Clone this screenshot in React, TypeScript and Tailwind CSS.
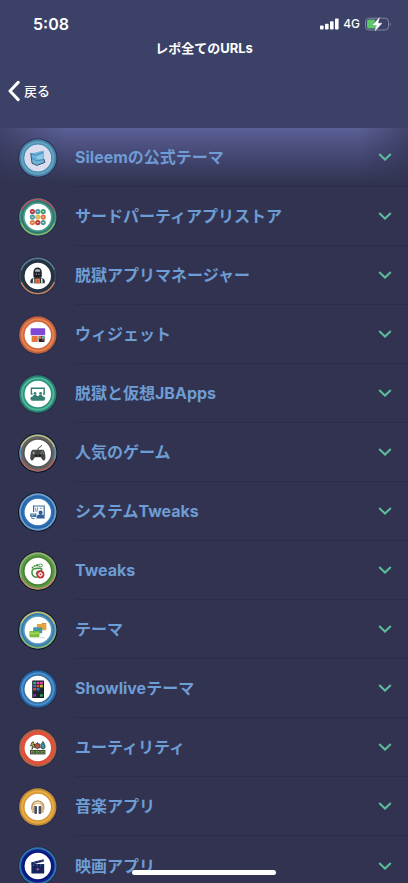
import type { ReactNode } from "react";

interface Category {
  name: string;
  icon: ReactNode;
}

// Round badge: coloured rings around a white disc that holds the glyph
function Badge({
  outer,
  middle,
  inner,
  edge,
  top,
  bottom,
  children,
}: {
  outer: string;
  middle: string;
  inner: string;
  edge?: string;
  top?: string;
  bottom?: string;
  children: ReactNode;
}) {
  return (
    <svg viewBox="0 0 40 40" className="size-10 shrink-0" aria-hidden="true">
      <circle cx="19.8" cy="20.2" r="19.6" fill={edge ?? "#282b47"} />
      <circle cx="19.8" cy="20" r="18.7" fill={outer} />
      {top && <path d="M3.3 14A17.6 17.6 0 0 1 36.3 14" fill="none" stroke={top} strokeWidth="1.6" />}
      {bottom && <path d="M3.3 26A17.6 17.6 0 0 0 36.3 26" fill="none" stroke={bottom} strokeWidth="1.6" />}
      <circle cx="19.8" cy="20" r="16.8" fill={middle} />
      <circle cx="19.8" cy="20" r="14.8" fill={inner} />
      <circle cx="19.8" cy="20" r="13.2" fill="#fff" />
      {children}
    </svg>
  );
}

const storeDots = [
  ["#b23a48", "#3f9aa0", "#3c9c78"],
  ["#4a9ca8", "#e0b545", "#d9743f"],
  ["#d98244", "#bd3547", "#4b9a92"],
];

const tiles = [
  ["#3aa99a", "#d04a9a", "#e0479a"],
  ["#3b6fc9", "#d5572f", "#c9b43c"],
  ["#e2474b", "#2c7dc0", "#202733"],
  ["#202733", "#202733", "#202733"],
  ["#7b35a8", "#202733", "#2d9d4c"],
];

const categories: Category[] = [
  {
    name: "Sileemの公式テーマ",
    icon: (
      <Badge outer="#477fa8" middle="#62a5bd" inner="#4c8eb6">
        <circle cx="19.8" cy="20" r="13.2" fill="#dcdcef" />
        <path d="m12.6 15.2 5.2-.8 7.8-1.8.6 8.6.8 3.2-8.2 3-4.6-2.2-.6-4.4z" fill="#6db3dc" />
        <path d="m12.6 15.2 5 2.2 8.2-3.4M14 20l4.2 2.8 8-1.2" fill="none" stroke="#4382a6" strokeWidth=".8" />
        <path d="m18.6 18.2 5.8-1.8.6 4-5.4 1.2z" fill="#8fcbe8" />
        <path d="m12.8 15.4 1.2 9.8 4.8 2.2 8-3-.8-3.2" fill="none" stroke="#2d4558" strokeWidth=".9" />
      </Badge>
    ),
  },
  {
    name: "サードパーティアプリストア",
    icon: (
      <Badge outer="#479180" middle="#2f7970" inner="#4a9c8c" top="#bd4967" bottom="#83ba65">
        {storeDots.map((row, y) =>
          row.map((color, x) => (
            <g key={`${x}-${y}`}>
              <circle cx={14.4 + x * 5.4} cy={14.6 + y * 5.5} r="2.6" fill={color} />
              <path d={`M${13.5 + x * 5.4} ${14.6 + y * 5.5}h1.8`} stroke="#f1e5d8" strokeWidth=".9" />
            </g>
          ))
        )}
      </Badge>
    ),
  },
  {
    name: "脱獄アプリマネージャー",
    icon: (
      <Badge outer="#3c4554" middle="#263448" inner="#243143" top="#5c7e91" bottom="#c9835d">
        <path d="M15.4 21v-4.6c0-3 1.8-4.8 4.2-4.8s4.2 1.8 4.2 4.8V21l-2 1.4h-4.400z" fill="#22252c" />
        <path d="M17 14.200c1-1.200 4.200-1.200 5.200 0l-.2 1.600h-4.800z" fill="#aab3b8" />
        <path d="M17.200 17.200h4.800l-.6 2.600h-3.600z" fill="#0f1217" />
        <path d="M17.800 17.800h1.300v.8h-1.300zm2.400 0h1.300v.8h-1.300z" fill="#fff" />
        <path d="M12.400 27.300v-2.300c0-1.700 2-2.800 4.100-3.200h6.200c2.100.4 4.100 1.500 4.100 3.200v2.300z" fill="#2c343c" />
        <path d="m15.700 22.500-.2 4.700M23.700 22.500l.2 4.700" stroke="#e5eef0" strokeWidth="1.400" />
        <rect x="17.200" y="22.600" width="4.800" height="5" rx=".5" fill="#df7041" />
        <path d="M18.900 25.200h1.500" stroke="#6b382b" strokeWidth=".9" />
      </Badge>
    ),
  },
  {
    name: "ウィジェット",
    icon: (
      <Badge outer="#bd6040" middle="#e98249" inner="#cf6640">
        <rect x="12.600" y="13.200" width="14.600" height="7" rx=".8" fill="#8046d6" />
        <rect x="13.600" y="21" width="6.200" height="6" rx=".8" fill="#e5753b" />
        <rect x="20.600" y="21" width="6" height="6" rx=".8" fill="#202329" />
        <path d="M20.800 21.200h2.500v2.600h-2.500z" fill="#e87557" />
        <path d="M23.800 21.200h2.600v2.600h-2.600z" fill="#59bda1" />
        <path d="M23.800 24.400h2.600v1h-2.600z" fill="#e44d54" />
      </Badge>
    ),
  },
  {
    name: "脱獄と仮想JBApps",
    icon: (
      <Badge outer="#287e72" middle="#51b898" inner="#2b927c">
        <path d="M14.600 20h-1.200v-5.800h12.800V20H25" fill="none" stroke="#347f72" strokeWidth="1.400" />
        <circle cx="17" cy="19.400" r="1.400" fill="#347f72" />
        <circle cx="22.600" cy="19.400" r="1.400" fill="#347f72" />
        <path d="M15 22c.6-1.600 3.400-1.600 4 0h1.600c.6-1.600 3.400-1.600 4 0v1H15z" fill="#347f72" />
        <rect x="12.400" y="22.400" width="14.800" height="4.400" rx="2.200" fill="#347f72" />
      </Badge>
    ),
  },
  {
    name: "人気のゲーム",
    icon: (
      <Badge outer="#6291b6" middle="#656363" inner="#565656" edge="#0a0c10" top="#c0be75" bottom="#b75a50">
        <path d="M20 17.500c-.4-2.200.6-3 1.700-3.300 1-.3 1.400-.9 2-2.200" fill="none" stroke="#303234" strokeWidth="1" />
        <path d="M15.200 16.800h9.300c1.600 0 2.200 1.700 2.700 5 .5 3.500.2 5.500-1.200 5.600-1.200.1-2.200-1.700-3.200-3.200h-5.900c-1 1.500-2 3.300-3.200 3.200-1.400-.1-1.700-2.100-1.200-5.600.5-3.300 1.100-5 2.700-5z" fill="#424446" />
        <path d="M15.700 18.500v3M14.200 20h3" stroke="#999" strokeWidth="1" />
        <circle cx="24.200" cy="18.800" r=".7" fill="#9da4a0" />
        <circle cx="25.400" cy="20.200" r=".7" fill="#a28e70" />
        <circle cx="23" cy="20.200" r=".7" fill="#8ba0b1" />
        <circle cx="18.100" cy="22.500" r="1.300" fill="#191b1c" />
        <circle cx="21.800" cy="22.500" r="1.300" fill="#191b1c" />
      </Badge>
    ),
  },
  {
    name: "システムTweaks",
    icon: (
      <Badge outer="#6d9fce" middle="#2865a9" inner="#3173b7" edge="#0b1320">
        <path d="M15.600 20v-6h10.600v10" fill="none" stroke="#3a6c9f" strokeWidth="1.200" />
        <path d="M17.600 18v-1.800M19.400 18v-2.600M17.200 19h3M21.800 16.200h2.400" stroke="#5587b5" strokeWidth=".9" />
        <circle cx="22.600" cy="20.400" r="2" fill="#2b6196" />
        <path d="M18.400 26.600c.1-3.400 1.600-4.400 4.200-4.400s4 1 4.200 4.400z" fill="#2b6196" />
        <rect x="12.200" y="21.400" width="6.200" height="3.500" rx=".4" fill="#396c9d" />
        <path d="M13.400 22.600h3.700M13.400 23.800h2" stroke="#c7dced" strokeWidth=".6" />
        <path d="M13.800 25.100v1.500h3" fill="none" stroke="#396c9d" strokeWidth=".8" />
      </Badge>
    ),
  },
  {
    name: "Tweaks",
    icon: (
      <Badge outer="#91ad82" middle="#589a3c" inner="#478236" edge="#10170e" bottom="#bd8670">
        <path
          d="M18.600 26.200c-3 .4-5.200-3-4.600-6 .4-2 2-2.600 4-2.700 2.400-.1 4.600-.8 5.700.4.800 1-.4 2-1.800 2.100-2 .1-3.300 1.200-3.400 3"
          fill="none"
          stroke="#439344"
          strokeWidth="1.500"
          strokeLinecap="round"
        />
        <circle cx="14.600" cy="16.400" r="1" fill="#439344" />
        <circle cx="16.700" cy="15" r="1.100" fill="#439344" />
        <circle cx="19.200" cy="14.300" r="1.200" fill="#439344" />
        <ellipse cx="22.600" cy="14.500" rx="1.900" ry="1.400" fill="none" stroke="#439344" strokeWidth="1" />
        <circle cx="22.400" cy="23.400" r="4" fill="#cb3039" />
        <circle cx="22.400" cy="23.400" r="1.500" fill="none" stroke="#fff" strokeWidth="1.100" />
        <path d="M22.400 20.900v1M22.400 24.900v1M19.900 23.400h1M23.900 23.400h1" stroke="#fff" strokeWidth=".8" />
      </Badge>
    ),
  },
  {
    name: "テーマ",
    icon: (
      <Badge outer="#6fa4bb" middle="#377eaa" inner="#5898bd" edge="#0a1014" top="#cbb96a" bottom="#88b36a">
        <rect x="18.800" y="14" width="9.600" height="6.200" rx=".8" fill="#e7a244" />
        <path d="M23.400 14v-.2l.8-.8h3.600l.6 1z" fill="#d98a24" />
        <rect x="15.200" y="17.200" width="9" height="6" rx=".8" fill="#3f9aa6" />
        <rect x="11.400" y="21" width="10" height="6" rx=".8" fill="#78ba37" />
        <path d="M11.600 21.800c3 1.400 6 .8 9.600-.4v2.400c-4 1.200-7 1-9.600.6z" fill="#9bd250" />
        <path d="M12.500 27.700h14" stroke="#bac5b6" strokeWidth=".7" />
      </Badge>
    ),
  },
  {
    name: "Showliveテーマ",
    icon: (
      <Badge outer="#2364a1" middle="#4b91cf" inner="#346da0">
        <rect x="14.200" y="11.400" width="11.800" height="17.600" rx=".5" fill="#18212b" />
        {tiles.map((row, y) =>
          row.map((color, x) => (
            <rect key={`${x}-${y}`} x={15.200 + x * 3.400} y={12.800 + y * 3.100} width="2.900" height="2.500" fill={color} />
          ))
        )}
      </Badge>
    ),
  },
  {
    name: "ユーティリティ",
    icon: (
      <Badge outer="#ad6641" middle="#e3523d" inner="#df4d38">
        <path d="m14.200 14-1.700 3.800h2l-.6 3.600 3.200-5H15l.8-2.400z" fill="#d6c340" stroke="#28322a" strokeWidth=".8" />
        <path d="m19.500 14.500.9 1.500 1.800.2-.5 1.600.6 1.800-1.800.4-1.200 1-1.100-1-1.800-.4.500-1.800-.5-1.600 1.800-.2z" fill="#bd5140" stroke="#28322a" strokeWidth=".8" />
        <path d="M24.900 13.500c1.400 2 2.200 3.600 2.200 5.200 0 3-4.200 3-4.200 0 0-1.600.8-3.200 2-5.200z" fill="#3c919d" stroke="#263841" strokeWidth=".8" />
        {[12.5, 17.6, 22.7].map((x) => (
          <g key={x}>
            <rect x={x} y="22.400" width="4.300" height="3.600" fill="#83a553" stroke="#293928" strokeWidth=".8" />
            <path d={`M${x + 1.200} 24.2h2`} stroke="#293928" strokeWidth="1" />
          </g>
        ))}
      </Badge>
    ),
  },
  {
    name: "音楽アプリ",
    icon: (
      <Badge outer="#c08a39" middle="#e8ad43" inner="#d59635">
        <path d="M14.200 22.800c-2.600-11.800 13.800-11.800 11.200 0" fill="none" stroke="#b99a68" strokeWidth="1.600" />
        <path d="M15.600 20c.6-5.200 7.800-5.200 8.400 0" fill="none" stroke="#e7c17c" strokeWidth="1.300" />
        <rect x="13.800" y="19.800" width="2.400" height="6.200" rx="1.100" fill="#d3b384" />
        <rect x="23.400" y="19.800" width="2.400" height="6.200" rx="1.100" fill="#d3b384" />
        <rect x="16.300" y="19" width="2.700" height="8" rx=".9" fill="#494e5b" />
        <rect x="20.600" y="19" width="2.700" height="8" rx=".9" fill="#494e5b" />
      </Badge>
    ),
  },
  {
    name: "映画アプリ",
    icon: (
      <Badge outer="#2d76ab" middle="#10208b" inner="#07167e">
        <path d="m13 16.400 12.400-3.200.6 2.400-12.400 3.200z" fill="#17255c" />
        <rect x="13.400" y="18" width="12.800" height="9.400" rx=".5" fill="#14245f" />
        <path d="m16 15.900 1.300 1.600M19.600 14.900l1.300 1.600M23 14l1.300 1.600M16 18.400l-.9 1.500M19.600 18.400l-.9 1.500M23.200 18.400l-.9 1.500" stroke="#8a9ec5" strokeWidth=".6" />
        <path d="m18.800 21.700 2.800 1.600-2.800 1.600z" fill="#cf5b83" />
      </Badge>
    ),
  },
];

function StatusBar() {
  return (
    <div className="flex h-12 items-center justify-between pr-4 pl-[33px] text-white">
      <span className="text-base font-semibold">5:08</span>
      <div className="flex items-center gap-1">
        <svg viewBox="0 0 20 12" className="h-3 w-5" fill="currentColor" aria-hidden="true">
          <rect x="1" y="7.500" width="3.600" height="4" rx=".8" />
          <rect x="6" y="5.800" width="3.600" height="5.700" rx=".8" />
          <rect x="11" y="3.200" width="3.600" height="8.300" rx=".8" />
          <rect x="16" y=".5" width="3.600" height="11" rx=".8" />
        </svg>
        <span className="text-xs leading-4 font-medium">4G</span>
        <svg viewBox="0 0 28 16" className="h-4 w-7" aria-hidden="true">
          <rect x="1.500" y="2.200" width="23" height="11.800" rx="3.400" fill="none" stroke="#8286a3" strokeWidth="1" />
          <path d="M5.200 3.600h6.300L9.200 9H12v3.600H5.200c-1.300 0-2.200-.8-2.200-2.200V5.800c0-1.400.9-2.200 2.200-2.200z" fill="#5cc568" />
          <path d="M25.800 6.400c1.300.5 1.300 3.100 0 3.600z" fill="#8286a3" />
          <path d="M15.400 1.600 8.800 8.900h3.800L11.200 14.700l6.800-7.500h-4z" fill="#fff" stroke="#fff" strokeWidth=".4" />
        </svg>
      </div>
    </div>
  );
}

function CategoryRow({ category }: { category: Category }) {
  return (
    <li className="group">
      <button type="button" className="flex h-[59px] w-full items-center gap-[17px] pl-[18px] text-left">
        {category.icon}
        <span className="flex h-full min-w-0 flex-1 items-center justify-between border-b border-[#2c2e48] pr-4 group-last:border-0">
          <span className="truncate text-base font-bold text-[#6e9cd4]">{category.name}</span>
          <svg viewBox="0 0 14 8" className="h-2 w-3.5 shrink-0" fill="none" aria-hidden="true">
            <path d="m1.200 1.100 5.800 5.500 5.800-5.500" stroke="#5cbd9d" strokeWidth="2" />
          </svg>
        </span>
      </button>
    </li>
  );
}

export default function App() {
  return (
    <div className="relative flex h-screen flex-col overflow-hidden bg-[#3c4168] font-['Inter','Noto_Sans_CJK_JP',sans-serif]">
      <header className="h-32 shrink-0">
        <StatusBar />
        <h1 className="-mt-2 text-center text-[13px] leading-4 font-bold text-white">レポ全てのURLs</h1>
        <nav className="pt-6 pl-2">
          <button type="button" className="flex items-center gap-1 text-[13px] leading-5 font-medium text-white">
            <svg viewBox="0 0 12 22" className="h-[22px] w-3" fill="none" aria-hidden="true">
              <path d="m10.200 2.400-8.200 8.600 8.200 8.600" stroke="currentColor" strokeWidth="3" strokeLinecap="round" strokeLinejoin="round" />
            </svg>
            戻る
          </button>
        </nav>
      </header>

      <main className="relative min-h-0 flex-1 bg-[#313350]">
        {/* Light that falls from the header on to the first row */}
        <div
          aria-hidden="true"
          className="pointer-events-none absolute inset-x-0 top-0 h-14 bg-linear-to-b from-[#5b6096] via-[#444772] to-[#313350] mask-[linear-gradient(to_right,rgba(0,0,0,0.4),black_16%,black_88%,rgba(0,0,0,0.4))]"
        />
        <ul className="relative h-full overflow-y-auto [scrollbar-width:none]">
          {categories.map((category) => (
            <CategoryRow key={category.name} category={category} />
          ))}
        </ul>
      </main>

      {/* Home indicator */}
      <div className="pointer-events-none absolute bottom-2 left-1/2 h-[5px] w-36 -translate-x-1/2 rounded-full bg-white" />
    </div>
  );
}
